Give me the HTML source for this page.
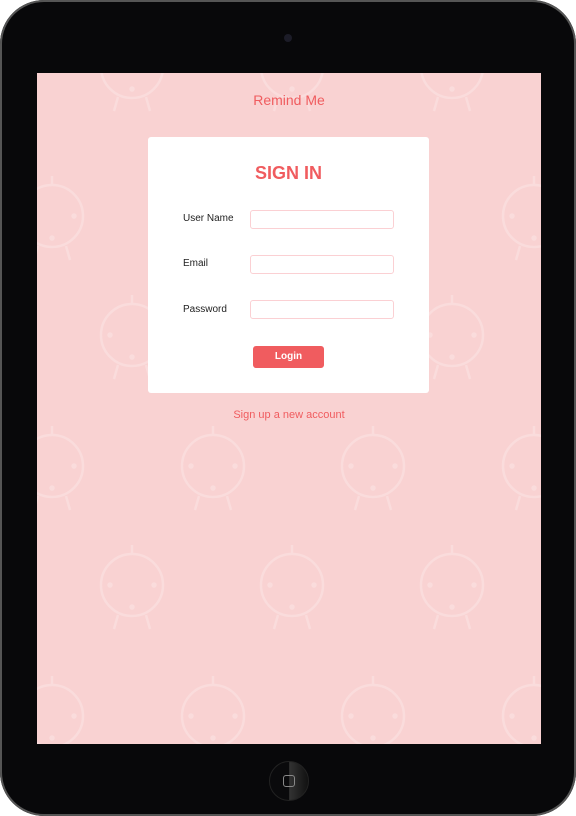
<!DOCTYPE html>
<html><head><style>
body{margin:0;width:576px;height:816px;background:#fff;position:relative;overflow:hidden;font-family:"Liberation Sans",sans-serif}
.dev{position:absolute;left:0;top:0;width:576px;height:816px;border-radius:44px;background:#08080a;box-shadow:inset 0 0 0 2px #555}
.cam{position:absolute;left:284px;top:34px;width:8px;height:8px;border-radius:50%;background:#1c1c28}
.screen{position:absolute;left:37px;top:73px;width:504px;height:671px;background:#f9d2d2;overflow:hidden}
.home{position:absolute;left:269px;top:761px;width:38px;height:38px;border-radius:50%;background:linear-gradient(90deg,#0a0a0c 50%,#333 51%,#111);border:1px solid #222}
.home i{position:absolute;left:13px;top:13px;width:10px;height:10px;border:1.5px solid #888;border-radius:3px}
.title{position:absolute;top:19px;width:100%;text-align:center;color:#f05c5f;font-size:14px}
.card{position:absolute;left:111px;top:64px;width:281px;height:256px;background:#fff;border-radius:3px}
h1{margin:0;position:absolute;top:26px;width:100%;text-align:center;color:#f05c5f;font-size:18px;font-weight:bold}
.lab{position:absolute;left:35px;font-size:10px;color:#222}
.inp{position:absolute;left:102px;width:142px;height:17px;border:1px solid #fbd0d3;border-radius:3px}
.btn{position:absolute;left:105px;top:209px;width:71px;height:22px;background:#f05c5f;border-radius:3px;color:#fff;font-size:10px;font-weight:bold;text-align:center;line-height:22px}
.link{position:absolute;top:336px;width:100%;text-align:center;color:#f05c5f;font-size:11px}
</style></head><body>
<div class="dev"><div class="cam"></div>
<div class="screen">
<svg width="504" height="671" style="position:absolute;left:0;top:0">
<defs><g id="c" fill="none" stroke="#fadcdc" stroke-width="2.5"><circle r="31"/><line x1="-14" y1="30" x2="-18" y2="44"/><line x1="14" y1="30" x2="18" y2="44"/><line x1="0" y1="-31" x2="0" y2="-40"/><circle r="1.5" cx="0" cy="22" fill="#fadcdc"/><circle r="1.5" cx="22" cy="0" fill="#fadcdc"/><circle r="1.5" cx="-22" cy="0" fill="#fadcdc"/></g></defs>
<use href="#c" x="95" y="-6"/><use href="#c" x="255" y="-6"/><use href="#c" x="415" y="-6"/>
<use href="#c" x="15" y="143"/><use href="#c" x="497" y="143"/>
<use href="#c" x="95" y="262"/><use href="#c" x="415" y="262"/>
<use href="#c" x="15" y="393"/><use href="#c" x="176" y="393"/><use href="#c" x="336" y="393"/><use href="#c" x="497" y="393"/>
<use href="#c" x="95" y="512"/><use href="#c" x="255" y="512"/><use href="#c" x="415" y="512"/>
<use href="#c" x="15" y="643"/><use href="#c" x="176" y="643"/><use href="#c" x="336" y="643"/><use href="#c" x="497" y="643"/>
</svg>
<div class="title">Remind Me</div>
<div class="card"><h1>SIGN IN</h1>
<div class="lab" style="top:76px">User Name</div><div class="inp" style="top:73px"></div>
<div class="lab" style="top:121px">Email</div><div class="inp" style="top:118px"></div>
<div class="lab" style="top:167px">Password</div><div class="inp" style="top:163px"></div>
<div class="btn">Login</div></div>
<div class="link">Sign up a new account</div>
</div>
<div class="home"><i></i></div>
</div>
</body></html>
